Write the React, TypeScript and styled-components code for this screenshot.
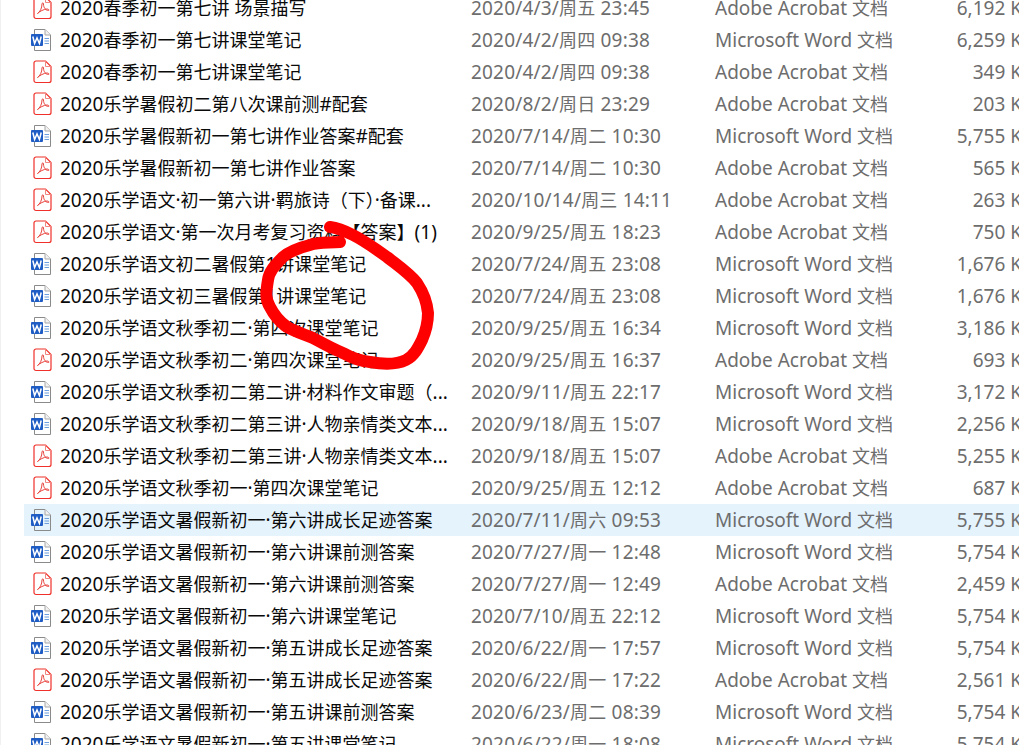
import React from "react";
import styled, { createGlobalStyle } from "styled-components";

const Global = createGlobalStyle`
  html, body { margin: 0; padding: 0; background: #fff; overflow: hidden; height: 100%; }
`;

const Page = styled.div`
  position: relative;
  width: 1019px;
  height: 745px;
  overflow: hidden;
  background: #fff;
  border-left: 1px solid #f0f0f0;
  box-sizing: border-box;
  font-family: "Noto Sans", "Noto Sans CJK SC", sans-serif;
  font-size: 19px;
`;

const List = styled.div`
  display: flex;
  flex-direction: column;
  margin-top: -8px;
  padding-left: 23px;
`;

const Row = styled.div<{ $selected?: boolean }>`
  display: grid;
  grid-template-columns: 12px 435px 244px 190px 152px;
  height: 32px;
  width: 1040px;
  align-items: center;
  background: ${(p) => (p.$selected ? "#e5f3fd" : "transparent")};
  line-height: 32px;
  white-space: nowrap;
`;

const IconCell = styled.div`
  width: 36px;
  height: 32px;
  display: flex;
  align-items: center;
  padding-left: 7px;
  box-sizing: border-box;
`;

const Name = styled.div`
  color: #0a0a0a;
  padding-left: 24px;
  overflow: hidden;
`;

const Muted = styled.div`
  color: #6d6d6d;
`;

const DateText = styled(Muted)`
  letter-spacing: 0.18px;
`;

const Size = styled(Muted)`
  text-align: right;
  width: 119px;
  margin-left: -2px;
`;

const Cjk = styled.span`
  font-size: 18px;
`;

const Scribble = styled.svg`
  position: absolute;
  left: -1px;
  top: 0;
  pointer-events: none;
`;

const Mixed = ({ text }: { text: string }) => (
  <>
    {text.split(/([\u3000-\u9fff\uff00-\uffef]+)/).map((part, i) =>
      i % 2 === 1 ? <Cjk key={i}>{part}</Cjk> : part
    )}
  </>
);

const WordIcon = () => (
  <svg width="22" height="24" viewBox="0 0 22 24" fill="none">
    <path d="M3.5 6V1.5H14L19.5 7V22.5H3.5V18" stroke="#8a8a8a" />
    <path d="M14 1.5V7H19.5" stroke="#a8a8a8" fill="#f2f2f2" />
    <rect x="0" y="6" width="12" height="12" rx="1" fill="#1f5cc4" />
    <path d="M1.8 8.5L3.6 15.5L6 10L8.4 15.5L10.2 8.5" stroke="#fff" strokeWidth="1.5" />
    <path d="M13.5 10.5H18M13.5 13H18M13.5 15.5H18" stroke="#6d9fdc" />
  </svg>
);

const PdfIcon = () => (
  <svg width="22" height="24" viewBox="0 0 22 24" fill="none">
    <path
      d="M5 1H14.5L20 6.5V20.5A2 2 0 0 1 18 22.5H5A2 2 0 0 1 3 20.5V3A2 2 0 0 1 5 1Z"
      stroke="#f0302a"
      strokeWidth="1.2"
      fill="#fff"
    />
    <path d="M14.5 1V6.5H20" stroke="#f08a85" />
    <path
      d="M6.5 17.5C9 16 11 12 11 8C11 6.5 12.5 6.5 12.5 8C12.5 12 15 14.5 17.5 14.5C18.5 14.5 18 13 16 13C13 13 8.5 15.5 6.5 17.5"
      stroke="#e8423c"
      strokeWidth="1"
    />
  </svg>
);

type Item = [string, string, "p" | "w", string];

const items: Item[] = [
  ["2020春季初一第七讲 场景描写", "2020/4/3/周五 23:45", "p", "6,192 K"],
  ["2020春季初一第七讲课堂笔记", "2020/4/2/周四 09:38", "w", "6,259 K"],
  ["2020春季初一第七讲课堂笔记", "2020/4/2/周四 09:38", "p", "349 K"],
  ["2020乐学暑假初二第八次课前测#配套", "2020/8/2/周日 23:29", "p", "203 K"],
  ["2020乐学暑假新初一第七讲作业答案#配套", "2020/7/14/周二 10:30", "w", "5,755 K"],
  ["2020乐学暑假新初一第七讲作业答案", "2020/7/14/周二 10:30", "p", "565 K"],
  ["2020乐学语文·初一第六讲·羁旅诗（下）·备课...", "2020/10/14/周三 14:11", "p", "263 K"],
  ["2020乐学语文·第一次月考复习资料【答案】(1)", "2020/9/25/周五 18:23", "p", "750 K"],
  ["2020乐学语文初二暑假第1讲课堂笔记", "2020/7/24/周五 23:08", "w", "1,676 K"],
  ["2020乐学语文初三暑假第1讲课堂笔记", "2020/7/24/周五 23:08", "w", "1,676 K"],
  ["2020乐学语文秋季初二·第四次课堂笔记", "2020/9/25/周五 16:34", "w", "3,186 K"],
  ["2020乐学语文秋季初二·第四次课堂笔记", "2020/9/25/周五 16:37", "p", "693 K"],
  ["2020乐学语文秋季初二第二讲·材料作文审题（...", "2020/9/11/周五 22:17", "w", "3,172 K"],
  ["2020乐学语文秋季初二第三讲·人物亲情类文本...", "2020/9/18/周五 15:07", "w", "2,256 K"],
  ["2020乐学语文秋季初二第三讲·人物亲情类文本...", "2020/9/18/周五 15:07", "p", "5,255 K"],
  ["2020乐学语文秋季初一·第四次课堂笔记", "2020/9/25/周五 12:12", "p", "687 K"],
  ["2020乐学语文暑假新初一·第六讲成长足迹答案", "2020/7/11/周六 09:53", "w", "5,755 K"],
  ["2020乐学语文暑假新初一·第六讲课前测答案", "2020/7/27/周一 12:48", "w", "5,754 K"],
  ["2020乐学语文暑假新初一·第六讲课前测答案", "2020/7/27/周一 12:49", "p", "2,459 K"],
  ["2020乐学语文暑假新初一·第六讲课堂笔记", "2020/7/10/周五 22:12", "w", "5,754 K"],
  ["2020乐学语文暑假新初一·第五讲成长足迹答案", "2020/6/22/周一 17:57", "w", "5,754 K"],
  ["2020乐学语文暑假新初一·第五讲成长足迹答案", "2020/6/22/周一 17:22", "p", "2,561 K"],
  ["2020乐学语文暑假新初一·第五讲课前测答案", "2020/6/23/周二 08:39", "w", "5,754 K"],
  ["2020乐学语文暑假新初一·第五讲课堂笔记", "2020/6/22/周一 18:08", "w", "5,754 K"],
];

export default function App() {
  return (
    <Page>
      <Global />
      <List>
        {items.map(([name, date, kind, size], i) => (
          <Row key={i} $selected={i === 16}>
            <IconCell>{kind === "w" ? <WordIcon /> : <PdfIcon />}</IconCell>
            <Name><Mixed text={name} /></Name>
            <DateText><Mixed text={date} /></DateText>
            <Muted><Mixed text={kind === "w" ? "Microsoft Word 文档" : "Adobe Acrobat 文档"} /></Muted>
            <Size>{size}</Size>
          </Row>
        ))}
      </List>
      <Scribble width="1019" height="745" viewBox="0 0 1019 745" fill="none">
        <path
          d="M340 242C328 243 318 242 310 245C298 248 290 251 283 257C274 266 269 272 268 280C266 292 265 299 270 307C275 317 280 322 287 327C296 332 304 334 313 338C324 344 333 349 343 353C352 358 360 361 370 362C381 364 396 365 406 360C414 356 418 348 422 340C426 331 428 322 428 313C427 302 423 292 417 283C409 273 397 265 387 257C376 249 365 241 353 235C345 231 338 228 330 227"
          stroke="#fe0000"
          strokeWidth="12"
          strokeLinecap="round"
          strokeLinejoin="round"
        />
      </Scribble>
    </Page>
  );
}
